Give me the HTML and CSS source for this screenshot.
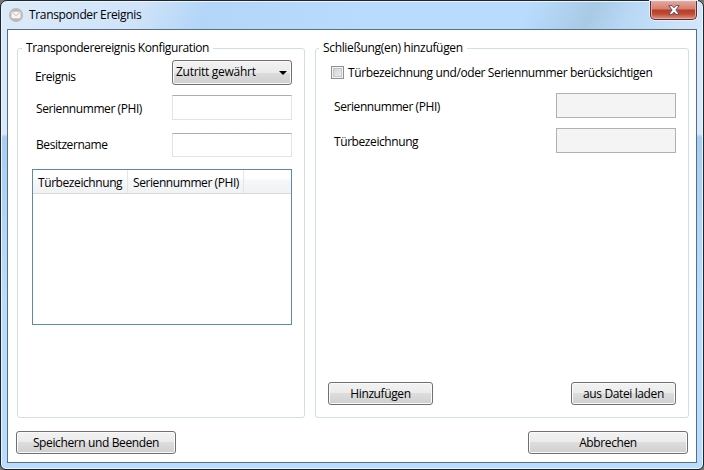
FILE: index.html
```
<!DOCTYPE html>
<html lang="de">
<head>
<meta charset="utf-8">
<title>Transponder Ereignis</title>
<link rel="stylesheet" href="styles.css">
</head>
<body>
<div class="window">
  <header class="titlebar">
    <svg class="app-icon" width="14" height="14" viewBox="0 0 14 14">
      <circle cx="7" cy="7" r="7" fill="#bcb8b5"/>
      <rect x="2.500" y="3.700" width="9" height="6.600" rx=".8" fill="#f7f5f3"/>
      <path d="M2.800 4.200 7 7.700l4.200-3.500" fill="none" stroke="#bfbab6" stroke-width=".9"/>
    </svg>
    <h1 class="title">Transponder Ereignis</h1>
    <button class="close" aria-label="Schließen">
      <svg width="12" height="10" viewBox="0 0 12 10">
        <path d="M.8.700h3.300L6 2.800 7.900.700h3.300L7.900 5l3.300 4.300H7.900L6 7.200 4.100 9.300H.8L4.100 5z" fill="#fff" stroke="#59506a" stroke-width="1"/>
      </svg>
    </button>
  </header>
  <main class="client">
    <div class="groups">
      <section class="group">
        <h2 class="legend">Transponderereignis Konfiguration</h2>
        <div class="row row-event"><label>Ereignis</label>
          <div class="combo"><span class="combo-text">Zutritt gewährt</span><i class="arrow"></i></div></div>
        <div class="row row-serial"><label>Seriennummer (PHI)</label><input class="field"></div>
        <div class="row row-owner"><label>Besitzername</label><input class="field short"></div>
        <div class="list">
          <div class="list-head"><span class="col door">Türbezeichnung</span><span class="col serial">Seriennummer (PHI)</span></div>
        </div>
      </section>
      <section class="group locks">
        <h2 class="legend">Schließung(en) hinzufügen</h2>
        <div class="check"><i class="box"></i><span class="check-text">Türbezeichnung und/oder Seriennummer berücksichtigen</span></div>
        <div class="row row-lock"><label>Seriennummer (PHI)</label><input class="field off" disabled></div>
        <div class="row row-door"><label>Türbezeichnung</label><input class="field off" disabled></div>
        <div class="actions"><button class="btn small">Hinzufügen</button><button class="btn small">aus Datei laden</button></div>
      </section>
    </div>
    <footer class="footer"><button class="btn wide">Speichern und Beenden</button><button class="btn wide">Abbrechen</button></footer>
  </main>
</div>
</body>
</html>
```
FILE: styles.css
```
* { box-sizing: border-box; }
body {
  margin: 0;
  width: 704px;
  height: 470px;
  overflow: hidden;
  background: #77736f;
  color: #000;
  font: 12px/16px "Open Sans", "Noto Sans", sans-serif;
  letter-spacing: -0.38px;
  white-space: nowrap;
}
h1, h2 { margin: 0; font: inherit; }
button, input { font: inherit; letter-spacing: inherit; color: inherit; }

.window {
  width: 704px;
  height: 470px;
  padding: 0 6px 6px;
  border: 1px solid #20242c;
  border-radius: 7px 7px 6px 6px;
  box-shadow: inset 0 0 0 1px #e9f5ff;
  background:
    linear-gradient(115deg, #dcebfa 0, #cfe3f9 130px, #b3d5f7 190px, #b9dcfe 340px, #b9dcfe 480px, #a9cae5 540px, #b8d8f5 575px, #d5e8fb 650px) 0 0 / 100% 28px no-repeat,
    linear-gradient(#d8e9fb 0, #d8e9fb 133px, #a8cdf3 136px, #badcff 300px, #badcff 100%);
}

.titlebar { display: flex; height: 28px; padding-left: 2px; }
.app-icon { margin-top: 7px; flex: none; }
.title { margin: 6px 0 0 6px; letter-spacing: -0.35px; }
.close {
  display: flex;
  justify-content: center;
  width: 47px;
  height: 19px;
  margin-left: auto;
  padding: 4px 0 0 1px;
  border: 1px solid #5c2930;
  border-top: 0;
  border-radius: 0 0 5px 5px;
  background: linear-gradient(#e5a79a 0, #d5806f 8px, #b93d28 9px, #c04b35 13px, #dd9580 100%);
  box-shadow: inset 0 0 0 1px #eba99b, 0 0 0 1px #e3f1ff;
}

.client {
  height: 434px;
  padding: 18px 7px 0 9px;
  border: 1px solid #586e82;
  background: #fff;
}
.groups { display: grid; grid-template-columns: 288px 374px; gap: 10px; height: 370px; }
.group {
  display: flex;
  flex-direction: column;
  padding: 0 12px 12px 15px;
  border: 1px solid #d1dfe5;
  border-radius: 3px;
}
.legend {
  align-self: flex-start;
  height: 16px;
  margin: -9px 0 0 -11px;
  padding: 0 4px;
  background: #fff;
}
.locks .legend { margin-left: -12px; letter-spacing: -0.34px; }

.row { display: flex; justify-content: space-between; align-items: flex-start; padding-left: 3px; height: 26px; }
.row label { margin-top: 6px; letter-spacing: -0.42px; }
.row-event { margin-top: 4px; }
.row-event label { margin-top: 9px; margin-left: -1px; }
.row-serial { margin-top: 9px; }
.row-owner { margin-top: 12px; }
.row-owner label { margin-top: 4px; }
.field {
  flex: none;
  width: 120px;
  height: 25px;
  border: 1px solid #e2e3ea;
  border-top-color: #abadb3;
  background: #fff;
}
.field.short { height: 24px; }
.field.off { border-color: #adb2b5; background: #f4f4f4; }
.combo {
  display: flex;
  align-items: center;
  justify-content: space-between;
  width: 120px;
  height: 25px;
  padding: 0 4px 2px 3px;
  border: 1px solid #707070;
  border-radius: 3px;
  background: linear-gradient(#f2f2f2, #ebebeb 50%, #dddddd 50%, #cfcfcf);
  box-shadow: inset 0 0 0 1px #fafafa;
  letter-spacing: -0.28px;
}
.arrow { margin-top: 3px; border: 4px solid transparent; border-top-color: #000; border-bottom: 0; }

.list { width: 260px; height: 156px; margin: 10px 0 0 -1px; border: 1px solid #5f87b5; }
.list-head {
  display: flex;
  height: 24px;
  border-bottom: 1px solid #d8dade;
  background: linear-gradient(#fff 0, #fff 9px, #f6f7f9 10px, #f1f2f4);
  letter-spacing: -0.42px;
}
.col { padding: 5px 0 0 5px; border-right: 1px solid #e3e5e8; }
.door { width: 95px; }
.serial { width: 116px; }

.check { display: flex; height: 16px; margin-top: 9px; }
.box {
  width: 13px;
  height: 13px;
  margin: 1px 4px 0 0;
  border: 1px solid #8e8f8f;
  background: linear-gradient(135deg, #c9ccd2, #f3f3f3);
  box-shadow: inset 0 0 0 1px #f4f4f4, inset 0 0 0 2px #c2c6cb;
}
.row-lock { margin-top: 12px; }
.row-door { margin-top: 9px; }
.actions { display: flex; justify-content: space-between; margin: auto 0 0 -3px; }
.footer { display: flex; justify-content: space-between; margin: 13px 1px 0 -1px; }
.btn {
  height: 23px;
  padding: 1px 0 0;
  border: 1px solid #707070;
  border-radius: 3px;
  background: linear-gradient(#f2f2f2, #ebebeb 50%, #dddddd 50%, #cfcfcf);
  box-shadow: inset 0 0 0 1px #fafafa;
}
.small { width: 105px; }
.wide { width: 160px; }
```
